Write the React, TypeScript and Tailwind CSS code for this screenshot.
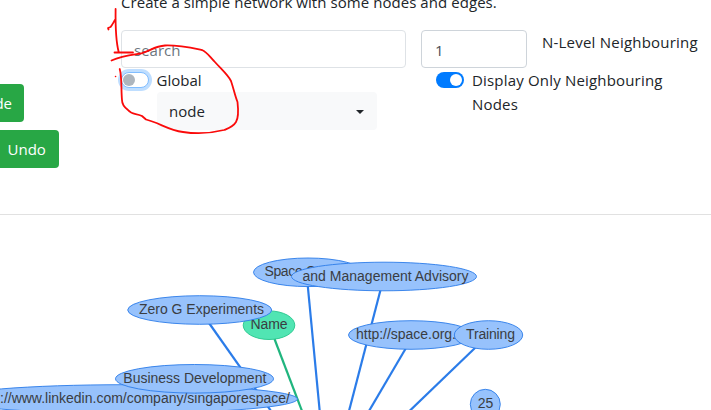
import React from "react";

type NodeShape = {
  label: string;
  cx: number;
  cy: number;
  rx: number;
  ry: number;
  tx: number;
  width: number;
  green?: boolean;
};

const edges = [
  { x1: 209, y1: 323, x2: 271, y2: 411 },
  { x1: 274.5, y1: 339, x2: 302, y2: 411, green: true },
  { x1: 307.7, y1: 285, x2: 319.7, y2: 411 },
  { x1: 380.5, y1: 290, x2: 349, y2: 411 },
  { x1: 406, y1: 348, x2: 369, y2: 411 },
  { x1: 476, y1: 347, x2: 409.5, y2: 411 },
];

const nodes: NodeShape[] = [
  { label: "Name", cx: 269, cy: 325.2, rx: 25.8, ry: 14.3, tx: 250.5, width: 37, green: true },
  { label: "Space Company", cx: 308, cy: 272.3, rx: 54.5, ry: 14.3, tx: 264.5, width: 99 },
  { label: "and Management Advisory", cx: 384, cy: 276.5, rx: 92.5, ry: 14.3, tx: 302.5, width: 166 },
  { label: "Zero G Experiments", cx: 199.7, cy: 310, rx: 72, ry: 14.3, tx: 139, width: 125 },
  { label: "://www.linkedin.com/company/singaporespace/", cx: 124, cy: 399, rx: 173.5, ry: 14.3, tx: 0, width: 290 },
  { label: "Business Development", cx: 194.5, cy: 378.8, rx: 79, ry: 14.3, tx: 123.3, width: 143 },
  { label: "http://space.org.", cx: 411, cy: 335, rx: 62.5, ry: 14.3, tx: 356, width: 100 },
  { label: "Training", cx: 488.5, cy: 335, rx: 34.2, ry: 14.3, tx: 466, width: 49 },
  { label: "25", cx: 485.3, cy: 404.3, rx: 15, ry: 15, tx: 477.7, width: 15.5 },
];

function Toggle({ on = false }: { on?: boolean }) {
  return (
    <span
      className={
        on
          ? "mt-1 flex h-4 w-7 shrink-0 items-center justify-end rounded-full bg-[#007bff] p-0.5"
          : "mt-1 flex h-4 w-7 shrink-0 items-center rounded-full border border-[#80bdff] bg-white px-px shadow-[0_0_0_3px_#bfdeff]"
      }
    >
      <span className={on ? "size-3 rounded-full bg-white" : "size-3 rounded-full bg-[#adb5bd]"} />
    </span>
  );
}

function Network() {
  return (
    <svg className="block h-[195px] w-[711px]" viewBox="0 215 711 195">
      {edges.map((e, i) => (
        <line key={i} x1={e.x1} y1={e.y1} x2={e.x2} y2={e.y2} stroke={e.green ? "#20b57e" : "#2b7ce9"} strokeWidth="2.2" />
      ))}
      {nodes.map((n) => (
        <g key={n.label}>
          <ellipse cx={n.cx} cy={n.cy} rx={n.rx} ry={n.ry} fill={n.green ? "#51e5b3" : "#97c2fc"} stroke={n.green ? "#26c58b" : "#2b7ce9"} strokeWidth="0.9" />
          <text x={n.tx} y={Math.floor(n.cy + 4.5)} textLength={n.width} className="fill-[#3a3d42] font-['Liberation_Sans',sans-serif] text-[14px]">
            {n.label}
          </text>
        </g>
      ))}
    </svg>
  );
}

function Annotation() {
  return (
    <svg className="pointer-events-none absolute left-0 top-0 h-[180px] w-[300px]" viewBox="0 0 300 180" fill="none" stroke="#fa0a0a" strokeWidth="1.8" strokeLinecap="round" strokeLinejoin="round">
      <path d="M115.6 9 C115.4 24 115.5 40 118.7 52 M115.6 19 C113.5 22 112.5 25 110.5 27 L108 28 L108.5 29.5 M114.5 52.5 H133" />
      <path d="M111.5 60.5 C122 56 132 55 141 53.5 C150 51 155 46 165 45.5 C178 45 192 48 202 50 C207 52 210 57 214 61 C223 71 228 75 231 81 C234 90 235 96 237.5 102 C238.5 111 238.5 118 236 122 C233 127 229 128 224 130 C212 133 196 134 183 132 C168 130 160 123 146 119.5 L142 116 C136 113 132 115 128 110 C124 107 122 104 122 100 C121 90 122 76 119.7 69" />
      <path d="M115.5 76.5 h0.1" strokeWidth="1.5" />
    </svg>
  );
}

export default function App() {
  return (
    <main className="relative h-[410px] w-[711px] overflow-hidden bg-white font-['Open_Sans','Noto_Sans',sans-serif] text-[15px] leading-6 text-[#212529]">
      <div className="flex h-[215px] border-b border-[#e1e1e1]">
        <aside className="flex w-[121px] shrink-0 flex-col items-start gap-2 pt-[84px] text-white">
          <button className="flex h-[38px] w-6 items-center justify-end rounded-r bg-[#28a745] pr-3">
            <span>Node</span>
          </button>
          <button className="h-[38px] w-[59px] rounded-r bg-[#28a745] pl-[7.5px] text-left">Undo</button>
        </aside>
        <section className="w-[590px]">
          <p className="-mt-[10px] mb-4 whitespace-nowrap tracking-[0.06px]">Create a simple network with some nodes and edges.</p>
          <div className="flex gap-[15px]">
            <div className="w-[285px] shrink-0">
              <input placeholder="search" className="block h-[38px] w-full rounded border border-[#dee2e6] px-3 pt-0.5 placeholder:text-[#6c757d]" />
              <div className="flex gap-[7.5px]">
                <Toggle />
                <span>Global</span>
              </div>
              <button className="ml-9 flex h-[38px] w-[220px] items-center justify-between rounded bg-[#f8f9fa] pl-3 pr-[13px]">
                <span>node</span>
                <span className="mt-px border-x-[4.5px] border-t-[4.5px] border-x-transparent border-t-[#212529]" />
              </button>
            </div>
            <div className="w-[290px] shrink-0">
              <div className="flex gap-[15px]">
                <input defaultValue="1" className="h-[38px] w-[106px] rounded border border-[#ced4da] px-[13px] pt-0.5 text-[#495057]" />
                <span className="whitespace-nowrap tracking-[0.22px]">N-Level Neighbouring</span>
              </div>
              <div className="ml-[15px] flex gap-2">
                <Toggle on />
                <span className="w-[200px] tracking-[0.18px]">Display Only Neighbouring<br />Nodes</span>
              </div>
            </div>
          </div>
        </section>
      </div>
      <Network />
      <Annotation />
    </main>
  );
}
